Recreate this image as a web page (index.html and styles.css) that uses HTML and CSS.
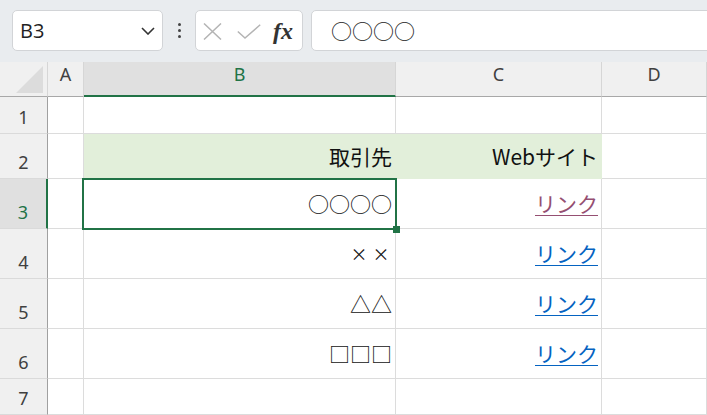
FILE: index.html
```html
<!DOCTYPE html>
<html lang="ja">
<head>
<meta charset="utf-8">
<title>Sheet</title>
<link rel="stylesheet" href="styles.css">
</head>
<body>
<div class="toolbar">
  <div class="namebox">
    <span class="ref">B3</span>
    <svg class="chev" width="14" height="8" viewBox="0 0 14 8"><path d="M1 1 L7 7 L13 1" fill="none" stroke="#333" stroke-width="1.6"/></svg>
  </div>
  <div class="dots"><i></i><i></i><i></i></div>
  <div class="btns">
    <svg class="cancel" width="19" height="17" viewBox="0 0 19 17"><path d="M1 0.5 L18 16.5 M18 0.5 L1 16.5" stroke="#b4b4b4" stroke-width="1.5" fill="none"/></svg>
    <svg class="enter" width="24" height="15" viewBox="0 0 24 15"><path d="M0.8 7.5 L8 14 L23.2 0.8" stroke="#b4b4b4" stroke-width="1.5" fill="none"/></svg>
    <span class="fx">fx</span>
  </div>
  <div class="formula">○○○○</div>
</div>

<div class="sheet">
  <div class="corner"><svg width="27" height="27" viewBox="0 0 27 27"><path d="M27 0 L27 27 L0 27 Z" fill="#dcdcdc"/></svg></div>
  <div class="ch">A</div>
  <div class="ch ch-sel">B</div>
  <div class="ch">C</div>
  <div class="ch">D</div>

  <div class="rh">1</div>
  <div class="c"></div>
  <div class="c"></div>
  <div class="c"></div>
  <div class="c"></div>

  <div class="rh">2</div>
  <div class="c"></div>
  <div class="c fill">取引先</div>
  <div class="c fill">Webサイト</div>
  <div class="c"></div>

  <div class="rh rh-sel">3</div>
  <div class="c"></div>
  <div class="c">○○○○</div>
  <div class="c"><a class="link visited">リンク</a></div>
  <div class="c"></div>

  <div class="rh">4</div>
  <div class="c"></div>
  <div class="c"><span class="mark">×</span><span class="mark">×</span></div>
  <div class="c"><a class="link">リンク</a></div>
  <div class="c"></div>

  <div class="rh">5</div>
  <div class="c"></div>
  <div class="c">△△</div>
  <div class="c"><a class="link">リンク</a></div>
  <div class="c"></div>

  <div class="rh">6</div>
  <div class="c"></div>
  <div class="c">□□□</div>
  <div class="c"><a class="link">リンク</a></div>
  <div class="c"></div>

  <div class="rh">7</div>
  <div class="c"></div>
  <div class="c"></div>
  <div class="c"></div>
  <div class="c"></div>

  <div class="selection"><span class="handle"></span></div>
</div>
</body>
</html>
```
FILE: styles.css
```css
* { box-sizing: border-box; }
html, body {
  margin: 0;
  padding: 0;
  width: 707px;
  height: 415px;
  overflow: hidden;
  background: #ffffff;
  font-family: "Noto Sans CJK JP", "Noto Sans", sans-serif;
}

.toolbar {
  height: 62px;
  background: #e9ecef;
  display: flex;
  align-items: flex-start;
  padding: 10px 0 0 12px;
}

.namebox {
  width: 151px;
  height: 41px;
  background: #fff;
  border: 1px solid #d2d4d7;
  border-radius: 5px;
  display: flex;
  align-items: center;
  padding: 0 7px 0 7px;
}
.ref {
  font-family: "Open Sans", "Noto Sans", sans-serif;
  font-size: 20px;
  color: #222;
  flex: 1;
  line-height: 1;
}

.dots {
  width: 32px;
  height: 41px;
  display: flex;
  flex-direction: column;
  align-items: center;
  justify-content: center;
  gap: 3px;
}
.dots i {
  display: block;
  width: 3px;
  height: 3px;
  background: #444;
  border-radius: 50%;
}

.btns {
  width: 108px;
  height: 41px;
  background: #fff;
  border: 1px solid #d2d4d7;
  border-radius: 5px;
  display: flex;
  align-items: center;
  padding-left: 7px;
}
.cancel { margin-top: 1px; }
.enter { margin-left: 15px; margin-top: 1px; }
.fx {
  margin-left: 12px;
  font-family: "Liberation Serif", serif;
  font-style: italic;
  font-weight: bold;
  font-size: 24px;
  color: #333;
  line-height: 1;
}

.formula {
  flex: 1;
  margin-left: 8px;
  margin-right: -10px;
  height: 41px;
  background: #fff;
  border: 1px solid #d2d4d7;
  border-radius: 5px;
  display: flex;
  align-items: center;
  padding-left: 19px;
  font-size: 21px;
  line-height: 1;
  color: #222;
}

.sheet {
  position: relative;
  display: grid;
  grid-template-columns: 48px 36px 312px 206px 1fr;
  grid-template-rows: 35px 37px 45px 50px 50px 50px 50px 36px;
}

.corner {
  background: #f0f0f0;
  border-right: 1px solid #d6d6d6;
  border-bottom: 1px solid #a8a8a8;
  display: flex;
  align-items: flex-end;
  justify-content: flex-end;
  padding: 0 4px 3px 0;
}
.corner svg { display: block; }

.ch {
  background: #f0f0f0;
  border-right: 1px solid #d6d6d6;
  border-bottom: 1px solid #a8a8a8;
  display: flex;
  align-items: flex-end;
  justify-content: center;
  padding-bottom: 13px;
  font-family: "Noto Sans", "Open Sans", sans-serif;
  font-size: 18px;
  line-height: 18px;
  color: #404040;
}
.ch-sel {
  background: #e0e0e0;
  color: #217346;
  border-bottom: 2px solid #217346;
  padding-bottom: 12px;
}

.rh {
  background: #f0f0f0;
  border-right: 1px solid #a0a0a0;
  border-bottom: 1px solid #dadada;
  display: flex;
  align-items: flex-end;
  justify-content: center;
  padding-bottom: 7px;
  font-family: "Noto Sans", "Open Sans", sans-serif;
  font-size: 18px;
  line-height: 18px;
  color: #404040;
}
.rh-sel {
  background: #e0e0e0;
  color: #217346;
  border-right: 2px solid #217346;
}

.c {
  border-right: 1px solid #dcdcdc;
  border-bottom: 1px solid #dcdcdc;
  display: flex;
  align-items: center;
  justify-content: flex-end;
  padding-right: 3px;
  font-size: 21px;
  line-height: 21px;
  color: #111;
  white-space: nowrap;
}
.fill {
  background: #e2efda;
  border-color: #e2efda;
}
.mark {
  display: inline-block;
  width: 22px;
  text-align: center;
  font-size: 17px;
}

.link {
  color: #0563c1;
  text-decoration: underline;
  text-decoration-thickness: 1px;
  text-underline-offset: 3px;
}
.link.visited { color: #954f72; }

.selection {
  position: absolute;
  left: 82px;
  top: 116px;
  width: 315px;
  height: 52px;
  border: 2px solid #217346;
  pointer-events: none;
}
.handle {
  position: absolute;
  right: -5px;
  bottom: -5px;
  width: 7px;
  height: 7px;
  background: #217346;
}
```
